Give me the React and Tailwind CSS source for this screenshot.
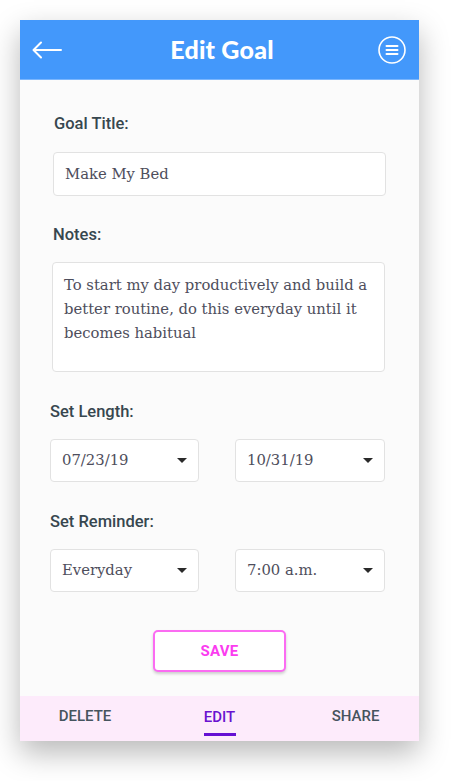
import React from "react";

const label = "font-['Roboto',sans-serif] font-medium text-[16.5px] leading-[20px] text-[#37474f]";
const field =
  "bg-white border border-[#e2e2e2] rounded-[4px] font-['DejaVu_Serif',serif] text-[14.8px] text-[#4e4e5c]";

const Caret = () => (
  <svg width="10" height="5" viewBox="0 0 10 5" className="shrink-0">
    <path d="M0 0h10L5 5z" fill="#2a2a2a" />
  </svg>
);

const Select = ({ value, className }) => (
  <div className={`${field} h-[43px] flex items-center justify-between pl-[11px] pr-[11px] ${className}`}>
    <span>{value}</span>
    <Caret />
  </div>
);

const App = () => {
  return (
    <div className="min-h-[781px] bg-white pt-[20px] pl-[20px]">
      <div className="w-[399px] h-[721px] flex flex-col bg-[#fbfbfb] shadow-[0_12px_28px_rgba(0,0,0,0.28)]">
        {/* header */}
        <div className="h-[60px] bg-[#4398fb] flex items-center justify-between pl-[12px] pr-[13px] border-b border-[#7bb6fd]">
          <svg width="30" height="18" viewBox="0 0 30 18" fill="none" stroke="white" strokeWidth="2" strokeLinecap="round" strokeLinejoin="round">
            <path d="M29 9H2M9 1.5L1.5 9L9 16.5" />
          </svg>
          <h1 className="font-['Lato',sans-serif] font-black text-[25px] text-white tracking-[0.2px] pl-[4px]">Edit Goal</h1>
          <svg width="28" height="28" viewBox="0 0 28 28" fill="none" stroke="white" strokeWidth="1.6" strokeLinecap="round">
            <circle cx="14" cy="14" r="13" />
            <path d="M8.5 10h11M8.5 14h11M8.5 18h11" strokeWidth="2" />
          </svg>
        </div>

        {/* form */}
        <div className="flex-1 flex flex-col">
          <p className={`${label} mt-[34px] ml-[34px]`}>Goal Title:</p>
          <div className={`${field} mt-[18px] ml-[33px] w-[333px] h-[44px] flex items-center pl-[11px]`}>
            Make My Bed
          </div>

          <p className={`${label} mt-[29px] ml-[33px]`}>Notes:</p>
          <div className={`${field} mt-[17px] ml-[32px] w-[333px] h-[110px] pl-[11px] pt-[10px] leading-[24px]`}>
            <div>To start my day productively and build a</div>
            <div>better routine, do this everyday until it</div>
            <div>becomes habitual</div>
          </div>

          <p className={`${label} mt-[30px] ml-[30px]`}>Set Length:</p>
          <div className="flex mt-[17px] ml-[30px] gap-[36px]">
            <Select value="07/23/19" className="w-[149px]" />
            <Select value="10/31/19" className="w-[150px]" />
          </div>

          <p className={`${label} mt-[30px] ml-[30px]`}>Set Reminder:</p>
          <div className="flex mt-[17px] ml-[30px] gap-[36px]">
            <Select value="Everyday" className="w-[149px]" />
            <Select value="7:00 a.m." className="w-[150px]" />
          </div>

          <button className="mt-[38px] ml-[133px] w-[133px] h-[42px] bg-white border-2 border-[#fb6cf2] rounded-[5px] shadow-[0_2px_3px_rgba(0,0,0,0.18)] font-['Roboto',sans-serif] font-bold text-[15px] text-[#fb3cf0] tracking-[0.3px]">
            SAVE
          </button>
        </div>

        {/* bottom nav */}
        <div className="h-[45px] bg-[#fdebfb] grid grid-cols-3 font-['Roboto',sans-serif] font-medium text-[15px] text-[#46545e]">
          <div className="flex items-center justify-center pb-[4px] pr-[3px]">DELETE</div>
          <div className="flex flex-col items-center justify-center pt-[7px]">
            <span className="text-[#6a12d0] leading-[18px]">EDIT</span>
            <span className="mt-[7px] w-[32px] h-[3px] bg-[#6510d3]" />
          </div>
          <div className="flex items-center justify-center pb-[4px] pl-[6px]">SHARE</div>
        </div>
      </div>
    </div>
  );
};

export default App;
